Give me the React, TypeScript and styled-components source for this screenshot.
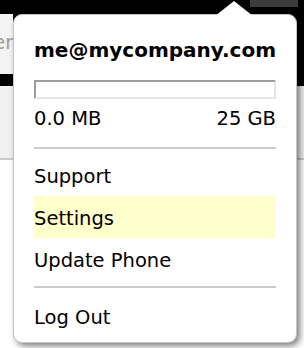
import React from "react";
import styled, { createGlobalStyle } from "styled-components";

const Global = createGlobalStyle`
  html, body { margin: 0; padding: 0; background: #ffffff; }
  body { font-family: "DejaVu Sans", Verdana, sans-serif; }
`;

const Page = styled.div`
  position: relative;
  width: 304px;
  height: 348px;
  overflow: hidden;
  background: #ffffff;
`;

const Header = styled.div`
  height: 86px;
  background: #000000;
  padding-top: 14px;
  box-sizing: border-box;
  display: flex;
  justify-content: space-between;
  align-items: flex-start;
`;

const SearchBox = styled.div`
  width: 13px;
  height: 60px;
  background: #f3f3f3;
  overflow: hidden;
  display: flex;
  justify-content: flex-end;
  align-items: center;
  color: #9a9a9a;
  font-size: 19px;
  white-space: nowrap;
  padding-bottom: 4px;
  box-sizing: border-box;
`;

const TopTab = styled.div`
  width: 48px;
  height: 7px;
  margin-top: -14px;
  margin-right: 6px;
  background: #3b3b3b;
`;

const Band = styled.div`
  height: 72px;
  background: #f1f1f1;
  border-bottom: 2px solid #cccccc;
`;

const Popover = styled.div`
  position: absolute;
  left: 13px;
  top: 14px;
  width: 284px;
  height: 329px;
  box-sizing: border-box;
  background: #ffffff;
  border: 1px solid #c4c4c4;
  border-radius: 9px;
  box-shadow: 3px 3px 6px rgba(0, 0, 0, 0.5);
  padding: 23px 20px 0 20px;
  color: #000000;
`;

const Caret = styled.svg`
  position: absolute;
  left: 201px;
  top: -14px;
  display: block;
`;

const Email = styled.div`
  font-weight: bold;
  font-size: 20px;
  line-height: 24px;
  white-space: nowrap;
`;

const Meter = styled.div`
  margin-top: 18px;
  height: 19px;
  box-sizing: border-box;
  border-style: solid;
  border-width: 2px;
  border-color: #9c9c9c #e6e6e6 #e6e6e6 #9c9c9c;
  background: #ffffff;
`;

const MeterFill = styled.div`
  height: 100%;
  background: #6aa0e0;
`;

const UsageRow = styled.div`
  margin-top: 8px;
  display: flex;
  justify-content: space-between;
  font-size: 19.5px;
  line-height: 24px;
`;

const Divider = styled.div<{ $top: number; $bottom: number }>`
  height: 2px;
  background: #cccccc;
  margin-top: ${(p) => p.$top}px;
  margin-bottom: ${(p) => p.$bottom}px;
`;

const Item = styled.div<{ $active?: boolean }>`
  height: 42px;
  box-sizing: border-box;
  padding-top: 3px;
  font-size: 19.5px;
  line-height: 39px;
  background: ${(p) => (p.$active ? "#ffffcc" : "transparent")};
  white-space: nowrap;
`;

export default function App() {
  const used = 0;
  return (
    <Page>
      <Global />
      <Header>
        <SearchBox>er</SearchBox>
        <TopTab />
      </Header>
      <Band />
      <Popover>
        <Caret width="38" height="15" viewBox="0 0 38 15">
          <polygon points="0,15 19,0 38,15" fill="#ffffff" />
        </Caret>
        <Email>me@mycompany.com</Email>
        <Meter>
          <MeterFill style={{ width: `${used}%` }} />
        </Meter>
        <UsageRow>
          <span>0.0 MB</span>
          <span>25 GB</span>
        </UsageRow>
        <Divider $top={16} $bottom={5} />
        <Item>Support</Item>
        <Item $active>Settings</Item>
        <Item>Update Phone</Item>
        <Divider $top={6} $bottom={7} />
        <Item>Log Out</Item>
      </Popover>
    </Page>
  );
}
